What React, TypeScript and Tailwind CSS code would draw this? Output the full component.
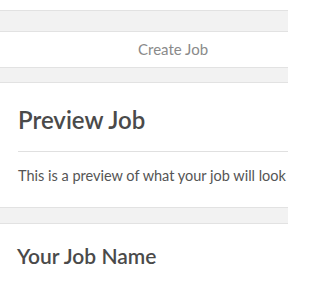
export default function App() {
  return (
    <div className="w-[288px] h-[288px] overflow-hidden bg-white font-['Lato','Open_Sans',sans-serif]">
      <div className="h-[10px]" />
      {/* top spacer band */}
      <div className="h-[22px] bg-[#f2f2f2] border-y border-[#e2e2e2]" />
      {/* nav row */}
      <div className="h-[35px] flex items-center pl-[138px]">
        <span className="text-[15px] text-[#8a8a8a] whitespace-nowrap">Create Job</span>
      </div>
      <div className="h-[16px] bg-[#f2f2f2] border-y border-[#e2e2e2]" />
      {/* preview card */}
      <div className="pl-[18px] pt-[21px] h-[124px]">
        <h1 className="text-[24px] font-semibold text-[#4a4a4a] leading-[32px]">Preview Job</h1>
        <div className="mt-[15px] border-t border-[#e0e0e0]" />
        <p className="mt-[14px] text-[14.5px] text-[#555] whitespace-nowrap leading-[20px]">
          This is a preview of what your job will look
        </p>
      </div>
      <div className="h-[17px] bg-[#f2f2f2] border-y border-[#e2e2e2]" />
      <div className="pl-[17px] pt-[18px]">
        <h2 className="text-[21px] font-semibold text-[#4a4a4a] leading-[28px] whitespace-nowrap">Your Job Name</h2>
      </div>
    </div>
  )
}
